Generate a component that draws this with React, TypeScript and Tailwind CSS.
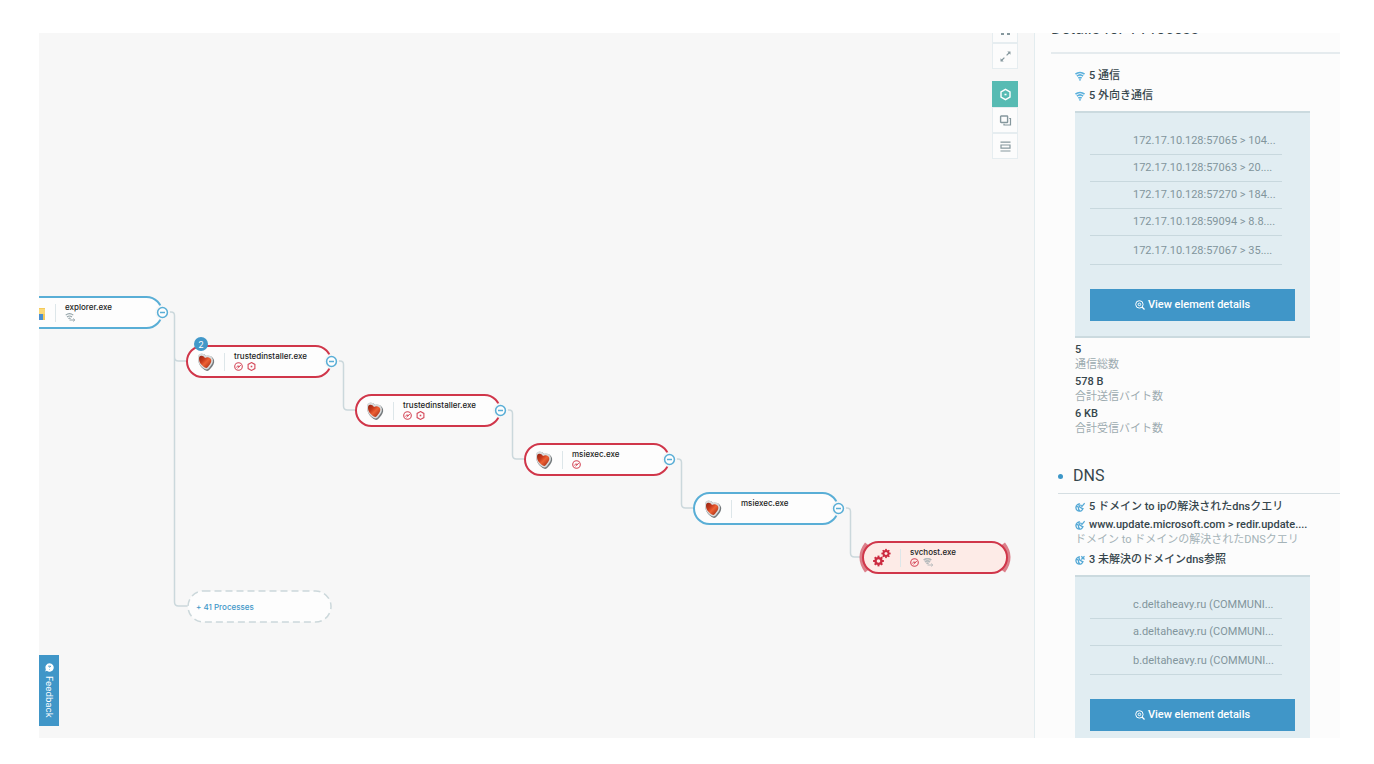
import type { ReactNode } from "react";

type Kind = "alert" | "normal" | "selected";
type Badge = "check" | "hex" | "wifi";

interface ProcessNode {
  name: string;
  kind: Kind;
  icon: "heart" | "folder" | "gears";
  badges: Badge[];
  count?: number;
  place: string;
}

const nodes: ProcessNode[] = [
  { name: "explorer.exe", kind: "normal", icon: "folder", badges: ["wifi"], place: "left-[-22px] top-[263px]" },
  { name: "trustedinstaller.exe", kind: "alert", icon: "heart", badges: ["check", "hex"], count: 2, place: "left-[147px] top-[312px]" },
  { name: "trustedinstaller.exe", kind: "alert", icon: "heart", badges: ["check", "hex"], place: "left-[316px] top-[361px]" },
  { name: "msiexec.exe", kind: "alert", icon: "heart", badges: ["check"], place: "left-[485px] top-[410px]" },
  { name: "msiexec.exe", kind: "normal", icon: "heart", badges: [], place: "left-[654px] top-[459px]" },
  { name: "svchost.exe", kind: "selected", icon: "gears", badges: ["check", "wifi"], place: "left-[823px] top-[508px]" },
];

const kindStyles: Record<Kind, string> = {
  alert: "border-[#d0364a] bg-[#fdfdfd]",
  normal: "border-[#59aed6] bg-[#fdfdfd]",
  selected: "border-[#d0364a] bg-[#fdebe7]",
};

const connections = [
  "172.17.10.128:57065 > 104...",
  "172.17.10.128:57063 > 20....",
  "172.17.10.128:57270 > 184...",
  "172.17.10.128:59094 > 8.8....",
  "172.17.10.128:57067 > 35....",
];

const domains = [
  "c.deltaheavy.ru (COMMUNI...",
  "a.deltaheavy.ru (COMMUNI...",
  "b.deltaheavy.ru (COMMUNI...",
];

const totals = [
  { value: "5", label: "通信総数" },
  { value: "578 B", label: "合計送信バイト数" },
  { value: "6 KB", label: "合計受信バイト数" },
];

function HeartIcon() {
  return (
    <svg width="20" height="20" viewBox="0 0 20 20">
      <defs>
        <linearGradient id="heart" x1="0" y1="0" x2="1" y2="1">
          <stop offset="0" stopColor="#8f2413" />
          <stop offset="0.35" stopColor="#c93a1c" />
          <stop offset="0.55" stopColor="#ee6234" />
          <stop offset="1" stopColor="#96200e" />
        </linearGradient>
      </defs>
      <path d="M3 3C5 1.200 8 1.400 10 4.200c3-1.200 7 .4 8 3.800.8 3.200-1 5.800-3 8-1.200 1.600-2.400 2.800-4 3C8.400 18.200 3.600 14.600 2.600 10 2.200 7.200 1.800 4.800 3 3z" fill="#74797c" />
      <path d="M2.800 2.600C4.800.8 7.800 1.200 9.400 3.800c3-1.200 6.600.2 7.400 3.400.6 2.800-.8 5.200-2.600 7.200-1.200 1.600-2.400 3-3.600 3.200C7.800 17 3.400 13.600 2.400 9.400 2 6.800 1.600 4.200 2.800 2.600z" fill="#d9dcdd" />
      <path d="M3.400 4.800c1-1.800 4-1.600 5.600 1.200 2.600-1.400 5.600-.4 6.200 1.800.5 2.200-.8 4-2.200 5.800-1 1.300-1.800 2.300-2.600 2.500C8 15.400 4.200 12.400 3.300 9 3 7.500 2.800 6 3.400 4.800z" fill="url(#heart)" />
    </svg>
  );
}

function FolderIcon() {
  return (
    <svg width="20" height="20" viewBox="0 0 20 20">
      <path d="M1 3h8l2 2h7v12H1z" fill="#f3c95c" />
      <path d="M1 6h17v5H1z" fill="#fad978" />
      <path d="M4 17v-6h12v6z" fill="#4b8fd0" />
    </svg>
  );
}

const teeth = [0, 45, 90, 135, 180, 225, 270, 315];

function Gear({ cx, cy, r }: { cx: number; cy: number; r: number }) {
  return (
    <g transform={`translate(${cx} ${cy})`}>
      <circle r={r * 0.6} fill="none" stroke="#cc2a40" strokeWidth={r * 0.46} />
      {teeth.map((angle) => (
        <rect key={angle} x={-r * 0.2} y={-r * 1.1} width={r * 0.4} height={r * 0.4} fill="#cc2a40" transform={`rotate(${angle})`} />
      ))}
    </g>
  );
}

function GearsIcon() {
  return (
    <svg width="20" height="20" viewBox="0 0 20 20">
      <Gear cx={6.5} cy={13} r={4.9} />
      <Gear cx={14} cy={5.5} r={4.2} />
    </svg>
  );
}

function BadgeIcon({ kind, muted }: { kind: Badge; muted?: boolean }) {
  if (kind === "check") {
    return (
      <svg width="9" height="9" viewBox="0 0 9 9" fill="none" stroke="#d5495a">
        <circle cx="4.500" cy="4.500" r="3.800" strokeWidth="1.100" />
        <path d="M2.300 5.600l1.700-2 .8 1.600 2-2.200M3.400 6.300l3-2.800" strokeWidth="0.900" />
      </svg>
    );
  }
  if (kind === "hex") {
    return (
      <svg width="9" height="9" viewBox="0 0 9 9" fill="none" stroke="#d5495a" strokeWidth="1.100">
        <path d="M4.500.6L7.900 2.400v4.200L4.500 8.400 1.100 6.600V2.400z" />
        <path d="M3.700 4.500h1.600" strokeWidth="1.600" />
      </svg>
    );
  }
  return (
    <svg width="11" height="9" viewBox="0 0 11 9" fill="none" stroke={muted ? "#b6babc" : "#94a3a8"}>
      <path d="M.7 2.200C3 .3 6 .3 8.300 2.200M2 4c1.600-1.300 3.400-1.300 5 0M3.400 5.600c.8-.6 1.500-.6 2.200 0" strokeWidth={muted ? 1.7 : 1.1} />
      <path d="M4.500 7h5M8.300 5.600L9.800 7 8.300 8.400" />
    </svg>
  );
}

function NodeCard({ node }: { node: ProcessNode }) {
  return (
    <div className={`absolute flex h-[33px] w-[146px] items-center rounded-full border-2 ${kindStyles[node.kind]} ${node.place}`}>
      <span className="ml-2 flex w-5 shrink-0">
        {node.icon === "heart" && <HeartIcon />}
        {node.icon === "folder" && <FolderIcon />}
        {node.icon === "gears" && <GearsIcon />}
      </span>
      <span className="ml-2 h-[18px] w-px bg-[#dde6e9]" />
      <div className="ml-[9px] flex h-[22px] flex-col">
        <span className="h-[11px] text-[8px] leading-[10px] font-medium text-[#222]">{node.name}</span>
        <span className="flex gap-1">
          {node.badges.map((badge) => (
            <BadgeIcon key={badge} kind={badge} muted={node.kind === "selected"} />
          ))}
        </span>
      </div>
      {node.count && (
        <span className="absolute -top-[10px] left-[6px] flex size-[14px] items-center justify-center rounded-full bg-[#4198c9] text-[9px] leading-none text-white">
          {node.count}
        </span>
      )}
      {node.kind !== "selected" && (
        <button
          aria-label={`Collapse ${node.name}`}
          className="absolute top-[7px] -right-[9px] flex size-[15px] items-center justify-center rounded-full bg-[#f7f7f7]"
        >
          <svg width="13" height="13" viewBox="0 0 13 13" fill="none" stroke="#59aed6" strokeWidth="1.500">
            <circle cx="6.500" cy="6.500" r="4.900" fill="#fdfdfd" />
            <path d="M4 6.500h5" />
          </svg>
        </button>
      )}
    </div>
  );
}

function ProcessTree() {
  return (
    <>
      <svg className="absolute top-0 left-0" width="995" height="705" fill="none" stroke="#cbd8dc" strokeWidth="1.500">
        <path d="M129 279h3q3.500 0 3.500 3.500V569q0 4 4 4h9M135.500 324q0 4 4 4h8" />
        <path d="M299 328h2q3.500 0 3.500 3.500V373q0 4 4 4h8" />
        <path d="M468 377h2q3.500 0 3.500 3.500V422q0 4 4 4h8" />
        <path d="M637 426h2q3.500 0 3.500 3.500V471q0 4 4 4h8" />
        <path d="M806 475h2q3.500 0 3.500 3.500V520q0 4 4 4h8" />
        <path d="M828 511q-10 13 0 27M964 511q10 13 0 27" stroke="#dc7f8a" strokeWidth="5" />
      </svg>
      {nodes.map((node) => (
        <NodeCard key={node.place} node={node} />
      ))}
      <button className="absolute top-[557px] left-[148px] h-[33px] w-[145px] text-left">
        <svg className="absolute inset-0" width="145" height="33">
          <rect x="1" y="1" width="143" height="31" rx="15.500" fill="#fdfdfd" stroke="#ccd8db" strokeWidth="1.500" strokeDasharray="7 4" />
        </svg>
        <span className="relative ml-[9px] block text-[8px] leading-[30px] font-medium text-[#3d97c8]">+ 41 Processes</span>
      </button>
    </>
  );
}

function ToolButton({ label, active, children }: { label: string; active?: boolean; children: ReactNode }) {
  return (
    <button
      aria-label={label}
      className={`flex h-[26px] w-[26px] items-center justify-center border ${
        active ? "border-[#57bbb3] bg-[#57bbb3] text-white" : "border-[#e6edf0] bg-[#fcfcfc] text-[#85979d]"
      }`}
    >
      <svg width="13" height="13" viewBox="0 0 13 13" fill="none" stroke="currentColor" strokeWidth="1.200">
        {children}
      </svg>
    </button>
  );
}

function Toolbar() {
  return (
    <div className="absolute -top-4 right-4 flex flex-col">
      <ToolButton label="Fit">
        <path d="M2 3h3v8H2zM8 3h3v8H8z" fill="currentColor" stroke="none" />
      </ToolButton>
      <ToolButton label="Expand">
        <path d="M7.600 5.400L10.500 2.500M5.400 7.600L2.500 10.500" />
        <path d="M8.300 1.500h3.200v3.200zM1.500 8.300v3.200h3.200z" fill="currentColor" stroke="none" />
      </ToolButton>
      <div className="h-3" />
      <ToolButton label="Malicious" active>
        <path d="M6.500 1.300L11 3.900v5.200l-4.500 2.600L2 9.100V3.900z" strokeWidth="1.400" />
        <path d="M5.500 6.500h2" strokeWidth="1.600" />
      </ToolButton>
      <ToolButton label="Group">
        <rect x="1.600" y="2" width="7" height="6.500" rx="0.600" strokeWidth="1.400" />
        <path d="M10.200 4.500h1.300V11H5V9.800" />
      </ToolButton>
      <ToolButton label="List">
        <path d="M1.500 2.200h10M1.500 11h10" />
        <path d="M2 5h9v3.200H2z" />
      </ToolButton>
    </div>
  );
}

function WifiIcon() {
  return (
    <svg className="shrink-0" width="10" height="10" viewBox="0 0 10 10" fill="none" stroke="#5bb0dc" strokeWidth="1.600">
      <path d="M.5 3.200C3 .9 7 .9 9.500 3.200M1.900 5.200c2-1.700 4.200-1.700 6.200 0M3.300 7.100c1.200-.9 2.200-.9 3.400 0" />
      <circle cx="5" cy="8.700" r="0.300" />
    </svg>
  );
}

function DnsIcon({ failed }: { failed?: boolean }) {
  return (
    <svg className="shrink-0" width="10" height="10" viewBox="0 0 10 10" fill="none" stroke="#55a9d6" strokeWidth="1.300">
      <path d="M5 2A3.600 3.600 0 1 0 8.100 6M1.400 4.200l2 1 .2 2 1 1.600M3.600 2.200L4.800 5l2.600 1.600" />
      {failed ? <path d="M6.300 1.300l3.200 3.200M9.500 1.300L6.300 4.500" /> : <path d="M5.400 2.800l1.600 1.600L9.700 1.200" />}
    </svg>
  );
}

function DetailBox({ items }: { items: string[] }) {
  return (
    <div className="w-[235px] border-y-2 border-[#cbdadf] bg-[#e1edf2] pt-[15px] pb-[15px] pl-[15px]">
      <ul className="w-[192px]">
        {items.map((item) => (
          <li
            key={item}
            className="border-b border-[#c8d8de] pl-[43px] text-[11px] leading-[26px] whitespace-nowrap text-[#82959c] last:pt-[2px]"
          >
            {item}
          </li>
        ))}
      </ul>
      <button className="mt-6 flex h-8 w-[205px] items-center justify-center gap-[3px] bg-[#4096c8] text-[11px] font-medium text-white">
        <svg width="10" height="10" viewBox="0 0 10 10" fill="none" stroke="currentColor">
          <circle cx="4.400" cy="4.400" r="3.700" />
          <circle cx="4.400" cy="4.400" r="1.300" />
          <path d="M7 7l2.500 2.500" strokeWidth="1.300" />
        </svg>
        View element details
      </button>
    </div>
  );
}

function DetailLine({ icon, children }: { icon: ReactNode; children: ReactNode }) {
  return (
    <p className="flex items-center gap-1 text-[11px] leading-[18px] font-medium whitespace-nowrap text-[#36464c]">
      {icon}
      {children}
    </p>
  );
}

function DetailsPanel() {
  return (
    <aside className="w-[306px] shrink-0 overflow-hidden border-l border-[#e3ecef] bg-[#fcfcfc] pl-4">
      <h2 className="-mt-4 h-[37px] border-b-2 border-[#e5ebee] text-base leading-6 whitespace-nowrap text-[#36464c]">
        Details for 1 Process
      </h2>
      <div className="pl-6">
        <div className="flex flex-col gap-[2px] pt-[13px]">
          <DetailLine icon={<WifiIcon />}>5 通信</DetailLine>
          <DetailLine icon={<WifiIcon />}>5 外向き通信</DetailLine>
        </div>
        <div className="pt-[6px]">
          <DetailBox items={connections} />
        </div>
        <dl className="flex flex-col gap-[2px] pt-1 text-[11px] leading-[15px]">
          {totals.map((total) => (
            <div key={total.label} className="flex flex-col-reverse">
              <dt className="text-[#9dabb0]">{total.label}</dt>
              <dd className="font-medium text-[#36464c]">{total.value}</dd>
            </div>
          ))}
        </dl>
      </div>
      <h3 className="mt-[30px] ml-[7px] flex h-[28px] items-start gap-[10px] border-b border-[#d5dee2] text-base leading-5 text-[#36464c]">
        <span className="mt-2 size-[5px] rounded-full bg-[#3d97c8]" />
        DNS
      </h3>
      <div className="pt-1 pl-6">
        <DetailLine icon={<DnsIcon />}>5 ドメイン to ipの解決されたdnsクエリ</DetailLine>
        <DetailLine icon={<DnsIcon />}>www.update.microsoft.com &gt; redir.update....</DetailLine>
        <p className="text-[11px] leading-3 whitespace-nowrap text-[#a5b3b8]">ドメイン to ドメインの解決されたDNSクエリ</p>
        <div className="pt-[5px]">
          <DetailLine icon={<DnsIcon failed />}>3 未解決のドメインdns参照</DetailLine>
        </div>
        <div className="pt-[6px]">
          <DetailBox items={domains} />
        </div>
      </div>
    </aside>
  );
}

export default function App() {
  return (
    <div className="flex h-screen bg-white pt-[33px] pr-[34px] pb-[26px] pl-[39px] font-[Roboto,'Noto_Sans_CJK_JP',sans-serif]">
      <main className="relative min-w-0 flex-1 overflow-hidden bg-[#f7f7f7] font-[Inter,sans-serif]">
        <ProcessTree />
        <Toolbar />
        <button className="absolute bottom-3 left-0 flex h-[71px] w-5 items-center justify-center gap-1 bg-[#4096c8] text-[9px] leading-5 text-white [writing-mode:vertical-rl]">
          <svg width="9" height="9" viewBox="0 0 9 9">
            <path d="M4.500.3a4.200 4.200 0 1 1-2.600 7.500L.3 8.400l.5-2.200A4.200 4.200 0 0 1 4.500.3z" fill="#fff" />
            <path d="M3.200 3.200h2.500L4.500 4.600M4.500 6v.5" fill="none" stroke="#4096c8" strokeWidth="0.900" />
          </svg>
          Feedback
        </button>
      </main>
      <DetailsPanel />
    </div>
  );
}
